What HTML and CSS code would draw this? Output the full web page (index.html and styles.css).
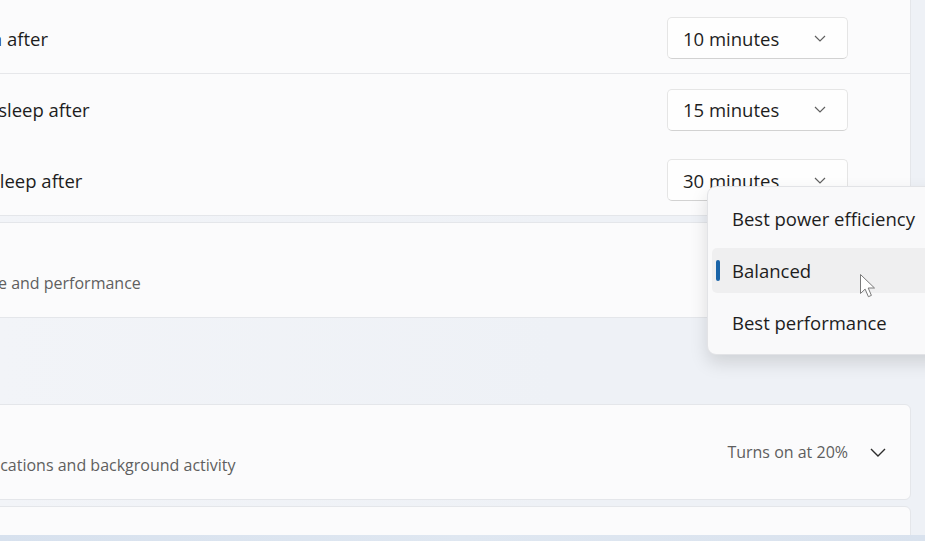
FILE: index.html
```html
<!DOCTYPE html>
<html lang="en">
<head>
    <meta charset="UTF-8">
    <meta name="viewport" content="width=device-width, initial-scale=1.0">
    <title>Power &amp; battery</title>
    <link rel="stylesheet" href="styles.css">
</head>
<body>
    <div class="window">
        <main class="page">
            <!-- Screen and sleep (expanded) -->
            <section class="card expander">
                <div class="row">
                    <span class="label">On battery power, turn off my screen after</span>
                    <div class="combo"><span>5 minutes</span><svg class="combo-chevron" viewBox="0 0 12 7"><path d="M1 1l5 5 5-5"/></svg></div>
                </div>
                <div class="row divided">
                    <span class="label">When plugged in, turn off my screen after</span>
                    <div class="combo"><span>10 minutes</span><svg class="combo-chevron" viewBox="0 0 12 7"><path d="M1 1l5 5 5-5"/></svg></div>
                </div>
                <div class="row">
                    <span class="label">On battery power, put my device to sleep after</span>
                    <div class="combo"><span>15 minutes</span><svg class="combo-chevron" viewBox="0 0 12 7"><path d="M1 1l5 5 5-5"/></svg></div>
                </div>
                <div class="row">
                    <span class="label">When plugged in, put my device to sleep after</span>
                    <div class="combo"><span>30 minutes</span><svg class="combo-chevron" viewBox="0 0 12 7"><path d="M1 1l5 5 5-5"/></svg></div>
                </div>
            </section>

            <section class="card setting">
                <span class="icon"></span>
                <div class="text">
                    <div class="title">Power mode</div>
                    <div class="desc">Optimize your device based on power use and performance</div>
                </div>
            </section>

            <h2 class="section-title">Battery</h2>

            <section class="card setting">
                <span class="icon"></span>
                <div class="text">
                    <div class="title">Battery saver</div>
                    <div class="desc">Extend battery life by limiting some notifications and background activity</div>
                </div>
                <div class="status">Turns on at 20%</div>
                <svg class="chevron" viewBox="0 0 16 9"><path d="M1 1l7 7 7-7"/></svg>
            </section>

            <section class="card setting">
                <span class="icon"></span>
                <div class="text">
                    <div class="title">Battery usage</div>
                </div>
            </section>
        </main>

        <!-- open power mode list -->
        <div class="flyout">
            <div class="option">Best power efficiency</div>
            <div class="option selected">
                Balanced
                <svg class="cursor" viewBox="0 0 17 26"><path d="M1.5 1.5v19l4.6-4.4 3.3 7.6 3-1.3-3.2-7.4h6.3z"/></svg>
            </div>
            <div class="option">Best performance</div>
        </div>
    </div>
    <div class="screen-edge"></div>
</body>
</html>
```

FILE: styles.css
```css
body {
    font-family: "Open Sans", "Noto Sans", sans-serif;
    margin: 0;
    padding: 0;
    height: 100vh;
    overflow: hidden;
    display: flex;
    flex-direction: column;
    background: #eef1f6;
    color: #1d1d1d;
}
.window {
    position: relative;
    flex: 1;
    overflow: hidden;
    background: linear-gradient(90deg, #f2f4f8 0%, #eef1f6 60%, #eef1f6 100%);
}
.page {
    margin: -69px 14px 0 -382px;
}
.card {
    background: #fbfbfc;
    border: 1px solid #e4e6ea;
    border-radius: 6px;
}
.expander .row {
    height: 71px;
    display: flex;
    align-items: center;
    justify-content: space-between;
    padding: 0 62px 0 70px;
    font-size: 18.5px;
}
.expander .row:last-child {
    height: 70px;
}
.expander .divided {
    height: 70px;
    border-bottom: 1px solid #e6e7ea;
}
.label {
    white-space: nowrap;
}
.combo {
    width: 181px;
    height: 42px;
    box-sizing: border-box;
    display: flex;
    align-items: center;
    justify-content: space-between;
    padding: 0 21px 0 15px;
    background: #fefefe;
    border: 1px solid #e5e5e5;
    border-bottom-color: #d2d2d2;
    border-radius: 5px;
    font-size: 18.5px;
}
.combo-chevron {
    width: 12px;
    height: 7px;
    fill: none;
    stroke: #606060;
    stroke-width: 1.2;
}
.setting {
    margin-top: 6px;
    height: 94px;
    display: flex;
    align-items: center;
    padding: 0 24px 0 22px;
}
.icon {
    width: 24px;
    height: 24px;
    margin-right: 30px;
}
.text {
    flex: 1;
    white-space: nowrap;
}
.title {
    font-size: 18.5px;
    line-height: 25px;
}
.desc {
    font-size: 16px;
    line-height: 22px;
    color: #5f5f5f;
}
.section-title {
    height: 86px;
    margin: 0 0 -6px;
    box-sizing: border-box;
    display: flex;
    align-items: flex-end;
    padding: 0 0 14px 4px;
    font-size: 18.5px;
    font-weight: 600;
}
.status {
    font-size: 16px;
    color: #5e5e5e;
    margin-right: 22px;
}
.chevron {
    width: 16px;
    height: 9px;
    fill: none;
    stroke: #2c2c2c;
    stroke-width: 1.4;
}
.flyout {
    position: absolute;
    left: 707px;
    top: 186px;
    width: 250px;
    padding: 9px 5px 9px 4px;
    display: flex;
    flex-direction: column;
    gap: 7px;
    background: #f9f9fa;
    border: 1px solid #e2e3e6;
    border-radius: 9px;
    box-shadow: 0 8px 18px rgba(0, 0, 0, 0.13);
}
.option {
    position: relative;
    height: 45px;
    display: flex;
    align-items: center;
    padding-left: 20px;
    border-radius: 5px;
    font-size: 18.5px;
}
.option.selected {
    background: #efeff0;
}
.option.selected::before {
    content: "";
    position: absolute;
    left: 4px;
    top: 12px;
    width: 4px;
    height: 21px;
    border-radius: 2px;
    background: #1a64a8;
}
.cursor {
    position: absolute;
    left: 147px;
    top: 25px;
    width: 17px;
    height: 26px;
    fill: #fff;
    stroke: #7a7a7a;
    stroke-width: 1;
    stroke-linejoin: round;
}
.screen-edge {
    height: 6px;
    background: linear-gradient(90deg, #d7e1ee, #dfe7f1 50%, #d9e2ee);
}
```
